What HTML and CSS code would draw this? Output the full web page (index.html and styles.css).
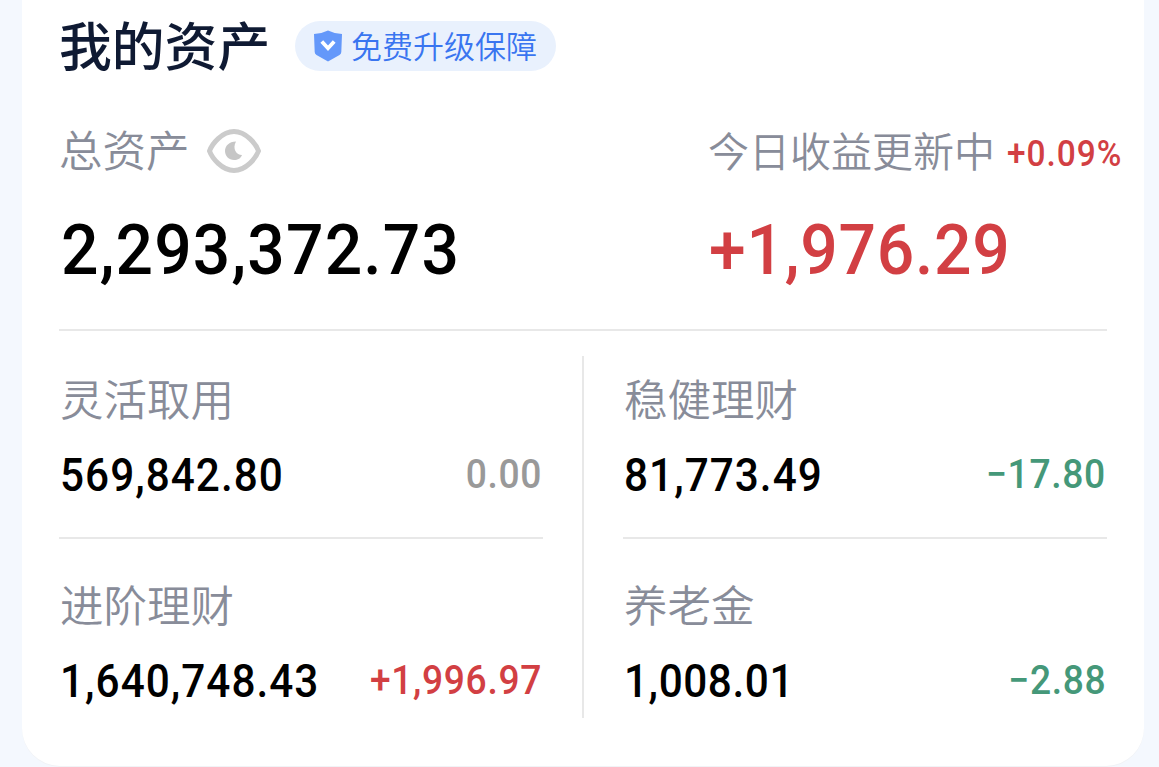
FILE: index.html
```html
<!DOCTYPE html>
<html lang="zh-CN">
<head>
<meta charset="utf-8">
<title>我的资产</title>
<link rel="stylesheet" href="styles.css">
</head>
<body>
<main class="card">
  <header class="header">
    <h1 class="title">我的资产</h1>
    <div class="badge">
      <svg class="shield" viewBox="0 0 28 32" width="28" height="32">
        <path fill="#6498fa" d="M14 .5Q20 3.600 28 4L27.300 22Q27.200 24 25.500 25L14 31.500L2.500 25Q.8 24 .7 22L0 4Q8 3.600 14 .5Z"/>
        <path d="M7.800 11.500l6.200 6.700 6.200-6.700" fill="none" stroke="#fff" stroke-width="3.800"/>
      </svg>
      <span class="badge-text">免费升级保障</span>
    </div>
  </header>
  <section class="summary">
    <div class="total">
      <div class="summary-label">
        <span class="label">总资产</span>
        <svg class="eye" viewBox="0 0 54 44" width="54" height="44">
          <path d="M2.500 22C5 15 15 2.500 27 2.500S49 15 51.500 22C49 29 39 41.500 27 41.500S5 29 2.500 22Z" fill="none" stroke="#cbcbcb" stroke-width="5" stroke-linejoin="round"/>
          <path d="M29 12.500C22 12.500 18 17 18 22C18 27 22 31 27 31C31 31 34 29 35 26C29.500 26 25 20 29 12.500Z" fill="#c6c6c6"/>
        </svg>
      </div>
      <div class="big"><span class="num">2,293,372.73</span></div>
    </div>
    <div class="today">
      <div class="summary-label">
        <span class="label today-label">今日收益更新中</span>
        <span class="num rate up">+0.09%</span>
      </div>
      <div class="big gain up"><span class="num">+1,976.29</span></div>
    </div>
  </section>
  <section class="groups">
    <div class="column">
      <div class="cell">
        <div class="label">灵活取用</div>
        <div class="values"><span class="num amount">569,842.80</span><span class="num delta flat">0.00</span></div>
      </div>
      <div class="cell">
        <div class="label">进阶理财</div>
        <div class="values"><span class="num amount">1,640,748.43</span><span class="num delta up">+1,996.97</span></div>
      </div>
    </div>
    <div class="separator"></div>
    <div class="column">
      <div class="cell">
        <div class="label">稳健理财</div>
        <div class="values"><span class="num amount">81,773.49</span><span class="num delta down">−17.80</span></div>
      </div>
      <div class="cell">
        <div class="label">养老金</div>
        <div class="values"><span class="num amount short">1,008.01</span><span class="num delta down">−2.88</span></div>
      </div>
    </div>
  </section>
</main>
</body>
</html>
```
FILE: styles.css
```css
* { box-sizing: border-box; }
body {
  margin: 0;
  height: 767px;
  overflow: hidden;
  background: #f4f8fe;
  font-family: "Noto Sans CJK SC", sans-serif;
}
.card {
  height: 766px;
  margin: 0 15px 0 22px;
  padding: 0 37px;
  background: #fff;
  border-radius: 0 0 38px 38px;
  box-shadow: 0 1px 0 #f1f3f6;
}
.header {
  display: flex;
  align-items: center;
  height: 92px;
}
.title {
  margin: 0 26px 6px 0;
  width: 210px;
  font-size: 52.800px;
  font-weight: 500;
  line-height: 60px;
  color: #0f1a33;
  white-space: nowrap;
}
.badge {
  display: flex;
  align-items: center;
  width: 261px;
  height: 50px;
  padding-left: 19px;
  gap: 9px;
  border-radius: 25px;
  background: #e9f1fd;
}
.shield { margin-bottom: 1px; flex: none; }
.badge-text {
  margin-bottom: 2px;
  font-size: 31px;
  font-weight: 350;
  line-height: 40px;
  color: #3975f0;
  white-space: nowrap;
}
.summary {
  display: grid;
  grid-template-columns: 649px 1fr;
  height: 239px;
  padding-top: 32px;
  border-bottom: 2px solid #e8e8e8;
}
.summary-label {
  display: flex;
  align-items: center;
  height: 54px;
  white-space: nowrap;
}
.label {
  font-size: 43.500px;
  font-weight: 350;
  line-height: 46px;
  color: #888c99;
  white-space: nowrap;
}
.cell .label {
  padding: 1px 0 0 1px;
  margin-bottom: -1px;
}
.summary-label .label { margin-bottom: 4px; }
.summary-label .today-label { font-size: 41px; }
.eye { margin-left: 17px; flex: none; }
.num {
  display: inline-block;
  font-family: Roboto, sans-serif;
  font-weight: 500;
  white-space: nowrap;
  transform: scaleX(.93);
  transform-origin: left center;
}
.rate {
  margin: 5px 0 0 12px;
  font-size: 36px;
  line-height: 40px;
  letter-spacing: 1px;
}
.big {
  margin-top: 37px;
  padding-left: 2px;
  font-family: Roboto, sans-serif;
  font-size: 71px;
  line-height: 70px;
  letter-spacing: 1.200px;
}
.gain { padding-left: 1px; letter-spacing: .8px; }
.groups {
  display: flex;
  gap: 39px;
  margin-top: 25px;
  height: 362px;
}
.separator { width: 2px; background: #e8e8e8; }
.column { width: 484px; }
.cell { padding-top: 41px; }
.cell:first-child {
  height: 183px;
  padding-top: 18px;
  border-bottom: 2px solid #e8e8e8;
}
.values {
  display: flex;
  justify-content: space-between;
  align-items: center;
  height: 50px;
  margin-top: 30px;
  padding: 1px 1px 0;
}
.amount { font-size: 45.500px; line-height: 50px; letter-spacing: 1.100px; }
.short { letter-spacing: .6px; }
.delta {
  margin-bottom: 2px;
  font-size: 40px;
  line-height: 44px;
  letter-spacing: .7px;
  transform-origin: right center;
}
.up { color: #d23f43; }
.down { color: #459879; }
.flat { color: #999; }
```
